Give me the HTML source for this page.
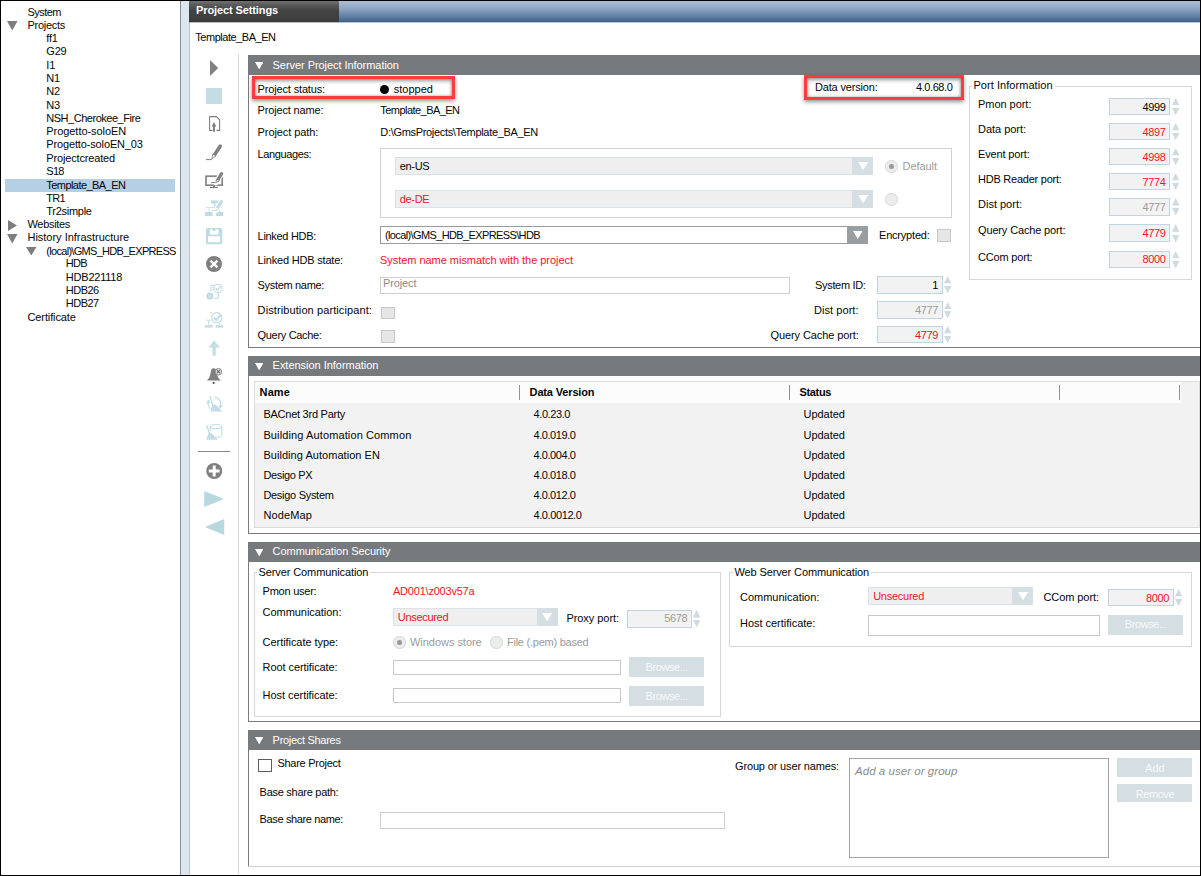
<!DOCTYPE html>
<html lang="en"><head><meta charset="utf-8"><title>Project Settings</title>
<style>
html,body{margin:0;padding:0;background:#fff}
body{width:1201px;height:876px;position:relative;overflow:hidden;font-family:"Liberation Sans",sans-serif;font-size:11px;line-height:14px;color:#050505}
.a{position:absolute}
.t{position:absolute;white-space:nowrap;height:14px}
b.t{font-weight:bold}
</style></head>
<body>
<div class="a" style="left:0px;top:0px;width:1201px;height:876px;background:#fff;"></div>
<div class="a" style="left:180px;top:1px;width:1px;height:874px;background:#8c8c8c;"></div>
<div class="a" style="left:181px;top:1px;width:8px;height:874px;background:#dbe7f0;"></div>
<div class="a" style="left:189px;top:22px;width:1px;height:853px;background:#c2c2c2;"></div>
<div class="a" style="left:189px;top:1px;width:150px;height:21px;background:linear-gradient(#717171 0%,#5a5a5a 18%,#444 45%,#3c3c3c 100%);"></div>
<div class="a" style="left:339px;top:1px;width:861px;height:21px;background:linear-gradient(#abbed7 0%,#8fa7c5 35%,#6682a6 70%,#40618a 100%);"></div>
<div class="a" style="left:189px;top:22px;width:150px;height:1px;background:rgba(60,60,60,.35);"></div>
<div class="a" style="left:339px;top:22px;width:861px;height:1px;background:rgba(64,97,138,.35);"></div>
<b class="t" style="left:196.00px;top:3.00px;color:#fff;letter-spacing:-0.109px;">Project Settings</b>
<span class="t" style="left:195.30px;top:30.00px;letter-spacing:-0.473px;">Template_BA_EN</span>
<div class="a" style="left:5px;top:179px;width:170px;height:13px;background:#b5cfe5;"></div>
<span class="t" style="left:27.50px;top:5.00px;letter-spacing:-0.565px;">System</span>
<span class="t" style="left:27.50px;top:18.00px;letter-spacing:-0.281px;">Projects</span>
<span class="t" style="left:46.30px;top:31.00px;letter-spacing:-0.200px;">ff1</span>
<span class="t" style="left:46.30px;top:44.00px;letter-spacing:-0.200px;">G29</span>
<span class="t" style="left:46.30px;top:58.00px;letter-spacing:-0.200px;">I1</span>
<span class="t" style="left:46.30px;top:71.00px;letter-spacing:-0.200px;">N1</span>
<span class="t" style="left:46.30px;top:84.00px;letter-spacing:-0.200px;">N2</span>
<span class="t" style="left:46.30px;top:98.00px;letter-spacing:-0.200px;">N3</span>
<span class="t" style="left:46.30px;top:111.00px;letter-spacing:-0.477px;">NSH_Cherokee_Fire</span>
<span class="t" style="left:46.30px;top:124.00px;letter-spacing:-0.055px;">Progetto-soloEN</span>
<span class="t" style="left:46.30px;top:137.00px;letter-spacing:-0.142px;">Progetto-soloEN_03</span>
<span class="t" style="left:46.30px;top:151.00px;letter-spacing:-0.160px;">Projectcreated</span>
<span class="t" style="left:46.30px;top:164.00px;letter-spacing:-0.700px;">S18</span>
<span class="t" style="left:46.30px;top:178.00px;letter-spacing:-0.559px;">Template_BA_EN</span>
<span class="t" style="left:46.30px;top:191.00px;letter-spacing:-0.700px;">TR1</span>
<span class="t" style="left:46.30px;top:204.00px;letter-spacing:-0.277px;">Tr2simple</span>
<span class="t" style="left:27.50px;top:217.00px;letter-spacing:-0.318px;">Websites</span>
<span class="t" style="left:27.50px;top:230.00px;letter-spacing:-0.018px;">History Infrastructure</span>
<span class="t" style="left:46.30px;top:244.00px;letter-spacing:-0.700px;">(local)\GMS_HDB_EXPRESS</span>
<span class="t" style="left:65.80px;top:256.00px;letter-spacing:-0.700px;">HDB</span>
<span class="t" style="left:65.80px;top:270.00px;letter-spacing:-0.213px;">HDB221118</span>
<span class="t" style="left:65.80px;top:283.00px;letter-spacing:-0.514px;">HDB26</span>
<span class="t" style="left:65.80px;top:296.00px;letter-spacing:-0.514px;">HDB27</span>
<span class="t" style="left:27.50px;top:310.00px;letter-spacing:-0.112px;">Certificate</span>
<svg class="a" style="left:7px;top:21px" width="10.5" height="9.5" viewBox="0 0 10.5 9.5"><polygon points="0,0 10.5,0 5.25,9.5" fill="#7d7d7d"/></svg>
<svg class="a" style="left:8px;top:220px" width="9" height="11" viewBox="0 0 9 11"><polygon points="0,0 9,5.5 0,11" fill="#7d7d7d"/></svg>
<svg class="a" style="left:7px;top:234px" width="10.5" height="9.5" viewBox="0 0 10.5 9.5"><polygon points="0,0 10.5,0 5.25,9.5" fill="#7d7d7d"/></svg>
<svg class="a" style="left:26.3px;top:247.3px" width="10.5" height="8.5" viewBox="0 0 10.5 8.5"><polygon points="0,0 10.5,0 5.25,8.5" fill="#7d7d7d"/></svg>
<div class="a" style="left:238px;top:54px;width:1px;height:821px;background:#dcdcdc;"></div>
<div class="a" style="left:198px;top:451px;width:32px;height:1px;background:#8a8a8a;"></div>
<svg class="a" style="left:196px;top:54px" width="40" height="490" viewBox="196 54 40 490"><polygon points="210,60 218.2,68 210,76" fill="#808080"/><rect x="206" y="88" width="16" height="16" fill="#c3dde3"/><path d="M212.6,130.4 H209.6 V116.6 H216.4 L219.6,119.8 V130.4 H216.4" fill="none" stroke="#808080" stroke-width="1.1"/><path d="M214,131.8 V125.5" stroke="#808080" stroke-width="2" fill="none"/><polygon points="214,122 216.4,126.6 211.6,126.6" fill="#808080"/><line x1="220.2" y1="146.2" x2="214.4" y2="155" stroke="#808080" stroke-width="3.6" stroke-linecap="round"/><polygon points="212.9,154.0 215.9,156.0 211.9,158.8" fill="#fff" stroke="#808080" stroke-width="0.8"/><path d="M206,159.6 H211.4 L212,158.6" stroke="#808080" stroke-width="1" fill="none"/><rect x="206" y="176.2" width="16.2" height="9" fill="none" stroke="#868686" stroke-width="1.7"/><path d="M214,185.4 V187.4" stroke="#808080" stroke-width="2" fill="none"/><path d="M210,187.5 H218" stroke="#808080" stroke-width="1.2" fill="none"/><line x1="221.6" y1="173.6" x2="216.0" y2="182.7" stroke="#fff" stroke-width="5.4" stroke-linecap="round"/><line x1="221.6" y1="173.6" x2="217.8" y2="179.8" stroke="#808080" stroke-width="3.2" stroke-linecap="round"/><polygon points="216.4,179.0 219.2,180.6 216.0,182.7" fill="#fff" stroke="#808080" stroke-width="0.8"/><path d="M211,182.6 H215.6" stroke="#808080" stroke-width="1" fill="none"/><rect x="211" y="200.4" width="7.5" height="3" fill="#bcdbe2"/><path d="M214.6,203 V207.6" stroke="#bcdbe2" stroke-width="1.6" fill="none"/><path d="M206,207.5 H222.4 M209,207.3 V212 M219.8,209 V212" stroke="#cbe3e9" stroke-width="1" fill="none"/><rect x="205" y="212" width="7.6" height="4" fill="#bcdbe2"/><rect x="215.8" y="212" width="7.4" height="4" fill="#bcdbe2"/><line x1="221.4" y1="201.6" x2="215.8" y2="210.7" stroke="#fff" stroke-width="5.2" stroke-linecap="round"/><line x1="221.4" y1="201.6" x2="217.6" y2="207.8" stroke="#bcdbe2" stroke-width="3" stroke-linecap="round"/><polygon points="216.3,207.0 218.9,208.6 215.8,210.7" fill="#fff" stroke="#bcdbe2" stroke-width="0.8"/><path d="M211.5,210.3 H215.4" stroke="#bcdbe2" stroke-width="1" fill="none"/><rect x="207" y="229" width="14.2" height="14.2" rx="0.8" fill="#fff" stroke="#bcdbe2" stroke-width="2"/><rect x="206.8" y="228.8" width="14.6" height="7.4" fill="#bcdbe2"/><rect x="209.8" y="229.4" width="8.8" height="5.2" fill="#fff"/><rect x="213" y="229" width="2.4" height="2" fill="#bcdbe2"/><circle cx="214" cy="264" r="8" fill="#808080"/><path d="M210.6,260.6 L217.4,267.4 M217.4,260.6 L210.6,267.4" stroke="#fff" stroke-width="2.5" fill="none"/><path d="M210.9,291.4 V285.5 H215 M218.3,292.6 V298.3 H214" stroke="#bcdbe2" stroke-width="1" fill="none"/><path d="M212,287.7 H215 M212,289.7 H214.6" stroke="#bcdbe2" stroke-width="0.9" fill="none"/><circle cx="209.8" cy="296" r="3.5" fill="#bcdbe2"/><circle cx="209.8" cy="296" r="1.6" fill="#d3e8ed"/><circle cx="218.1" cy="288.4" r="4.1" fill="#fff" stroke="#bcdbe2" stroke-width="1"/><path d="M215.7,288.3 L217.5,290.2 L220.6,286.4" stroke="#bcdbe2" stroke-width="1.5" fill="none"/><circle cx="216.8" cy="317.7" r="5.1" fill="#fff" stroke="#bcdbe2" stroke-width="1.1"/><path d="M213.7,317.6 L216.2,320.2 L220.6,314.9" stroke="#bcdbe2" stroke-width="1.8" fill="none"/><path d="M206,320.2 H210.8 M208.7,320.2 V324.6 M219.6,323 V324.6 M210.6,312.4 H212 M210.8,312.4 V313.8" stroke="#bcdbe2" stroke-width="0.9" fill="none"/><rect x="205" y="325" width="7.6" height="2.7" fill="#c4dfe6"/><rect x="215.8" y="325" width="7.4" height="2.7" fill="#c4dfe6"/><polygon points="214.1,340.6 219.9,347.4 208.3,347.4" fill="#c3dfe6"/><rect x="212.5" y="346.6" width="3.2" height="9.2" fill="#c3dfe6"/><path d="M213.4,368.2 C215.8,368.2 216.7,370.2 217,373 C217.4,376.6 218.4,378.6 221,380.5 H206.8 C209.2,378.6 210,376.4 210.6,373 C211,370.2 211.6,368.2 213.4,368.2 Z" fill="#808080"/><circle cx="213.6" cy="382.9" r="1.1" fill="#555"/><circle cx="218.4" cy="371.7" r="3.3" fill="#dcdcdc" stroke="#808080" stroke-width="0.9"/><path d="M216.9,370.2 L219.9,373.2 M219.9,370.2 L216.9,373.2" stroke="#6e6e6e" stroke-width="1.2" fill="none"/><path d="M208.3,402 A6.8,6.8 0 0 0 210.4,408.8" stroke="#bcdbe2" stroke-width="1.1" fill="none"/><polygon points="206.2,402.8 208.5,399.6 210.3,403" fill="#bcdbe2"/><path d="M215,397.4 A6.6,6.6 0 0 1 220.6,406" stroke="#bcdbe2" stroke-width="1.1" fill="none"/><polygon points="218.6,405 222.6,405.6 220,408.8" fill="#bcdbe2"/><path d="M209.9,396.3 L212.6,405" stroke="#bcdbe2" stroke-width="1.3" fill="none"/><polygon points="212.2,404.6 216.4,405.8 222,411.6 210.4,411.6" fill="#d2e7ec"/><path d="M212.6,405 L216.2,406.2" stroke="#bcdbe2" stroke-width="1.6"/><path d="M213,406 L211,411.6 M214,406.2 L213.6,411.6 M215,406.4 L216.4,411.6 M215.8,406.4 L219,411.6 M216.4,406.2 L221.6,411.6" stroke="#bcdbe2" stroke-width="1.05" fill="none"/><ellipse cx="216.2" cy="426.6" rx="5.6" ry="2.2" fill="#fff" stroke="#bcdbe2" stroke-width="1"/><path d="M210.6,426.6 V431 M221.8,426.6 V435 C221.8,437.4 217,437.6 214.6,437.2" stroke="#bcdbe2" stroke-width="1" fill="none"/><path d="M206.6,425.2 L209.4,433.2" stroke="#bcdbe2" stroke-width="1.3" fill="none"/><polygon points="208.6,433 212,434.2 217,439.8 206.4,439.8" fill="#d2e7ec"/><path d="M208.8,433.4 L212,434.6" stroke="#bcdbe2" stroke-width="1.6"/><path d="M209,434.4 L207,439.8 M210,434.6 L209.4,439.8 M210.8,434.8 L212,439.8 M211.4,434.8 L214.4,439.8 M212,434.6 L216.8,439.8" stroke="#bcdbe2" stroke-width="1.05" fill="none"/><circle cx="214.2" cy="471" r="8" fill="#808080"/><path d="M214.2,465.6 V476.4 M208.8,471 H219.6" stroke="#fff" stroke-width="3" fill="none"/><polygon points="204.2,491 224,499 204.2,507" fill="#b7d8e0"/><polygon points="224.2,519 204.8,527 224.2,535" fill="#b7d8e0"/></svg>
<div class="a" style="left:248px;top:55.2px;width:952px;height:19.5px;background:#767a7c;"></div>
<svg class="a" style="left:255px;top:62.0px" width="8.4" height="7.4" viewBox="0 0 8.4 7.4"><polygon points="0,0 8.4,0 4.2,7.4" fill="#fff"/></svg>
<span class="t" style="left:272.60px;top:58.00px;color:#fff;letter-spacing:-0.057px;">Server Project Information</span>
<div class="a" style="left:248px;top:74.2px;width:1px;height:273.1px;background:#7b7b7b;"></div>
<div class="a" style="left:248px;top:347.3px;width:952px;height:1px;background:#7b7b7b;"></div>
<div class="a" style="left:248px;top:356.3px;width:952px;height:19.5px;background:#767a7c;"></div>
<svg class="a" style="left:255px;top:363.1px" width="8.4" height="7.4" viewBox="0 0 8.4 7.4"><polygon points="0,0 8.4,0 4.2,7.4" fill="#fff"/></svg>
<span class="t" style="left:272.60px;top:358.00px;color:#fff;letter-spacing:-0.028px;">Extension Information</span>
<div class="a" style="left:248px;top:375.3px;width:1px;height:157.90000000000003px;background:#7b7b7b;"></div>
<div class="a" style="left:248px;top:533.2px;width:952px;height:1px;background:#7b7b7b;"></div>
<div class="a" style="left:248px;top:542.2px;width:952px;height:19.5px;background:#767a7c;"></div>
<svg class="a" style="left:255px;top:549.0px" width="8.4" height="7.4" viewBox="0 0 8.4 7.4"><polygon points="0,0 8.4,0 4.2,7.4" fill="#fff"/></svg>
<span class="t" style="left:272.60px;top:544.00px;color:#fff;letter-spacing:-0.064px;">Communication Security</span>
<div class="a" style="left:248px;top:561.2px;width:1px;height:160.0px;background:#7b7b7b;"></div>
<div class="a" style="left:248px;top:721.2px;width:952px;height:1px;background:#7b7b7b;"></div>
<div class="a" style="left:248px;top:730.2px;width:952px;height:19.5px;background:#767a7c;"></div>
<svg class="a" style="left:255px;top:737.0px" width="8.4" height="7.4" viewBox="0 0 8.4 7.4"><polygon points="0,0 8.4,0 4.2,7.4" fill="#fff"/></svg>
<span class="t" style="left:272.60px;top:733.00px;color:#fff;letter-spacing:-0.297px;">Project Shares</span>
<div class="a" style="left:248px;top:749.2px;width:1px;height:116.79999999999995px;background:#7b7b7b;"></div>
<div class="a" style="left:248px;top:866px;width:952px;height:1px;background:#cfcfcf;"></div>
<div class="a" style="left:252px;top:76px;width:203px;height:23px;box-sizing:border-box;border:3px solid #fd3c3f;box-shadow:0 2px 4px rgba(0,0,0,.42), inset 0 2px 4px rgba(0,0,0,.36), inset 0 0 3px rgba(0,0,0,.3);"></div>
<div class="a" style="left:804px;top:75px;width:159.6px;height:25px;box-sizing:border-box;border:3px solid #fd3c3f;box-shadow:0 2px 4px rgba(0,0,0,.42), inset 0 2px 4px rgba(0,0,0,.36), inset 0 0 3px rgba(0,0,0,.3);"></div>
<span class="t" style="left:257.60px;top:82.00px;letter-spacing:-0.154px;">Project status:</span>
<div class="a" style="left:380px;top:85px;width:9.4px;height:9.4px;border-radius:50%;background:#000"></div>
<span class="t" style="left:393.70px;top:82.00px;letter-spacing:0.021px;">stopped</span>
<span class="t" style="left:257.60px;top:103.00px;letter-spacing:-0.167px;">Project name:</span>
<span class="t" style="left:380.30px;top:103.00px;letter-spacing:-0.545px;">Template_BA_EN</span>
<span class="t" style="left:257.60px;top:125.00px;letter-spacing:-0.082px;">Project path:</span>
<span class="t" style="left:380.30px;top:125.00px;letter-spacing:-0.317px;">D:\GmsProjects\Template_BA_EN</span>
<span class="t" style="left:257.60px;top:147.00px;letter-spacing:-0.380px;">Languages:</span>
<span class="t" style="left:815.00px;top:80.00px;letter-spacing:-0.170px;">Data version:</span>
<span class="t" style="left:916.00px;top:80.00px;letter-spacing:-0.421px;">4.0.68.0</span>
<div class="a" style="left:380px;top:148.3px;width:571.6px;height:69.5px;border:1px solid #d0d1d2;box-sizing:border-box;"></div>
<div class="a" style="left:395px;top:157.4px;width:478px;height:17.5px;background:#efefef;border:1px solid #dbe1e4;box-sizing:border-box;"></div>
<div class="a" style="left:852px;top:157.4px;width:21px;height:17.5px;background:#d5dee2;"></div>
<svg class="a" style="left:857.8px;top:162.0px" width="10.2" height="8.2" viewBox="0 0 10.2 8.2"><polygon points="0,0 10.2,0 5.1,8.2" fill="#fff"/></svg>
<span class="t" style="left:399.80px;top:159.00px;color:#050505;letter-spacing:-0.338px;">en-US</span>
<div class="a" style="left:395px;top:190.3px;width:478px;height:17.5px;background:#efefef;border:1px solid #dbe1e4;box-sizing:border-box;"></div>
<div class="a" style="left:852px;top:190.3px;width:21px;height:17.5px;background:#d5dee2;"></div>
<svg class="a" style="left:857.8px;top:194.9px" width="10.2" height="8.2" viewBox="0 0 10.2 8.2"><polygon points="0,0 10.2,0 5.1,8.2" fill="#fff"/></svg>
<span class="t" style="left:399.80px;top:192.00px;color:#ee1428;letter-spacing:-0.338px;">de-DE</span>
<div class="a" style="left:885.1999999999999px;top:160.20000000000002px;width:12.4px;height:12.4px;border-radius:50%;box-sizing:border-box;background:#ececec;border:1px solid #d4dadc"></div>
<div class="a" style="left:889.1999999999999px;top:164.20000000000002px;width:4.4px;height:4.4px;border-radius:50%;background:#9a9a9a"></div>
<div class="a" style="left:885.1999999999999px;top:193.20000000000002px;width:12.4px;height:12.4px;border-radius:50%;box-sizing:border-box;background:#ececec;border:1px solid #d4dadc"></div>
<span class="t" style="left:902.60px;top:159.00px;color:#9b9b9b;letter-spacing:-0.066px;">Default</span>
<span class="t" style="left:257.60px;top:229.00px;letter-spacing:-0.306px;">Linked HDB:</span>
<div class="a" style="left:380px;top:226.2px;width:488px;height:17.5px;background:#fff;border:1px solid #979b9d;box-sizing:border-box;"></div>
<div class="a" style="left:847.4px;top:226.2px;width:20.6px;height:17.5px;background:#999ea1;"></div>
<svg class="a" style="left:852.8px;top:231px" width="9.6" height="8" viewBox="0 0 9.6 8"><polygon points="0,0 9.6,0 4.8,8" fill="#fff"/></svg>
<span class="t" style="left:385.00px;top:228.00px;letter-spacing:-0.622px;">(local)\GMS_HDB_EXPRESS\HDB</span>
<span class="t" style="left:879.00px;top:228.00px;letter-spacing:-0.199px;">Encrypted:</span>
<div class="a" style="left:937px;top:229.3px;width:14px;height:12.4px;background:#e6e6e6;border:1px solid #c9c9c9;box-sizing:border-box;"></div>
<span class="t" style="left:257.60px;top:253.00px;letter-spacing:-0.192px;">Linked HDB state:</span>
<span class="t" style="left:380.00px;top:253.00px;color:#ee1428;letter-spacing:-0.038px;">System name mismatch with the project</span>
<span class="t" style="left:257.60px;top:278.00px;letter-spacing:-0.326px;">System name:</span>
<div class="a" style="left:380px;top:276.6px;width:409.6px;height:17.2px;background:#fff;border:1px solid #cfcfcf;box-sizing:border-box;"></div>
<span class="t" style="left:383.00px;top:276.00px;color:#8a8a8a;letter-spacing:-0.121px;">Project</span>
<span class="t" style="left:257.60px;top:303.00px;letter-spacing:0.100px;">Distribution participant:</span>
<div class="a" style="left:381.4px;top:306.5px;width:14px;height:12.4px;background:#e6e6e6;border:1px solid #c9c9c9;box-sizing:border-box;"></div>
<span class="t" style="left:257.60px;top:328.00px;letter-spacing:-0.323px;">Query Cache:</span>
<div class="a" style="left:381.4px;top:330.4px;width:14px;height:12.4px;background:#e6e6e6;border:1px solid #c9c9c9;box-sizing:border-box;"></div>
<span class="t" style="left:815.00px;top:278.00px;letter-spacing:-0.320px;">System ID:</span>
<div class="a" style="left:877.4px;top:276.3px;width:65.2px;height:17.3px;background:#f2f2f2;border:1px solid #c1d4e2;box-sizing:border-box;"></div>
<span class="t" style="right:263.00px;top:278.00px;color:#050505;letter-spacing:-0.350px;">1</span>
<svg class="a" style="left:944.1px;top:276.40000000000003px" width="7.4" height="7.3500000000000005" viewBox="0 0 7.4 7.3500000000000005"><polygon points="0,7.3500000000000005 7.4,7.3500000000000005 3.7,0" fill="#d0dbdf"/></svg>
<svg class="a" style="left:944.1px;top:286.15px" width="7.4" height="7.3500000000000005" viewBox="0 0 7.4 7.3500000000000005"><polygon points="0,0 7.4,0 3.7,7.3500000000000005" fill="#d0dbdf"/></svg>
<span class="t" style="left:814.00px;top:303.00px;letter-spacing:0.058px;">Dist port:</span>
<div class="a" style="left:877.4px;top:301.4px;width:65.2px;height:17.2px;background:#f2f2f2;border:1px solid #c1d4e2;box-sizing:border-box;"></div>
<span class="t" style="right:263.00px;top:303.00px;color:#9b9b9b;letter-spacing:-0.350px;">4777</span>
<svg class="a" style="left:944.1px;top:301.5px" width="7.4" height="7.3" viewBox="0 0 7.4 7.3"><polygon points="0,7.3 7.4,7.3 3.7,0" fill="#d0dbdf"/></svg>
<svg class="a" style="left:944.1px;top:311.19999999999993px" width="7.4" height="7.3" viewBox="0 0 7.4 7.3"><polygon points="0,0 7.4,0 3.7,7.3" fill="#d0dbdf"/></svg>
<span class="t" style="left:770.60px;top:328.00px;letter-spacing:-0.110px;">Query Cache port:</span>
<div class="a" style="left:877.4px;top:326.3px;width:65.2px;height:17.2px;background:#f2f2f2;border:1px solid #c1d4e2;box-sizing:border-box;"></div>
<span class="t" style="right:263.00px;top:328.00px;color:#ee1428;letter-spacing:-0.350px;">4779</span>
<svg class="a" style="left:944.1px;top:326.40000000000003px" width="7.4" height="7.3" viewBox="0 0 7.4 7.3"><polygon points="0,7.3 7.4,7.3 3.7,0" fill="#d0dbdf"/></svg>
<svg class="a" style="left:944.1px;top:336.09999999999997px" width="7.4" height="7.3" viewBox="0 0 7.4 7.3"><polygon points="0,0 7.4,0 3.7,7.3" fill="#d0dbdf"/></svg>
<div class="a" style="left:969px;top:86.3px;width:223px;height:193.4px;border:1px solid #d6d9db;box-sizing:border-box;"></div>
<div class="a" style="left:972.4px;top:86.3px;width:82.2px;height:1px;background:#fff;"></div>
<span class="t" style="left:973.40px;top:78.00px;letter-spacing:0.058px;">Port Information</span>
<span class="t" style="left:978.00px;top:97.00px;letter-spacing:-0.041px;">Pmon port:</span>
<div class="a" style="left:1109.4px;top:98.3px;width:60.8px;height:16.8px;background:#f2f2f2;border:1px solid #c1d4e2;box-sizing:border-box;"></div>
<span class="t" style="right:35.40px;top:100.00px;color:#050505;letter-spacing:-0.350px;">4999</span>
<svg class="a" style="left:1171.7px;top:98.39999999999999px" width="7.4" height="7.1000000000000005" viewBox="0 0 7.4 7.1000000000000005"><polygon points="0,7.1000000000000005 7.4,7.1000000000000005 3.7,0" fill="#d0dbdf"/></svg>
<svg class="a" style="left:1171.7px;top:107.9px" width="7.4" height="7.1000000000000005" viewBox="0 0 7.4 7.1000000000000005"><polygon points="0,0 7.4,0 3.7,7.1000000000000005" fill="#d0dbdf"/></svg>
<span class="t" style="left:978.00px;top:122.00px;letter-spacing:-0.031px;">Data port:</span>
<div class="a" style="left:1109.4px;top:123.3px;width:60.8px;height:17px;background:#f2f2f2;border:1px solid #c1d4e2;box-sizing:border-box;"></div>
<span class="t" style="right:35.40px;top:125.00px;color:#ee1428;letter-spacing:-0.350px;">4897</span>
<svg class="a" style="left:1171.7px;top:123.39999999999999px" width="7.4" height="7.2" viewBox="0 0 7.4 7.2"><polygon points="0,7.2 7.4,7.2 3.7,0" fill="#d0dbdf"/></svg>
<svg class="a" style="left:1171.7px;top:133.00000000000003px" width="7.4" height="7.2" viewBox="0 0 7.4 7.2"><polygon points="0,0 7.4,0 3.7,7.2" fill="#d0dbdf"/></svg>
<span class="t" style="left:978.00px;top:147.00px;letter-spacing:-0.146px;">Event port:</span>
<div class="a" style="left:1109.4px;top:148.29999999999998px;width:60.8px;height:17px;background:#f2f2f2;border:1px solid #c1d4e2;box-sizing:border-box;"></div>
<span class="t" style="right:35.40px;top:150.00px;color:#ee1428;letter-spacing:-0.350px;">4998</span>
<svg class="a" style="left:1171.7px;top:148.39999999999998px" width="7.4" height="7.2" viewBox="0 0 7.4 7.2"><polygon points="0,7.2 7.4,7.2 3.7,0" fill="#d0dbdf"/></svg>
<svg class="a" style="left:1171.7px;top:158.0px" width="7.4" height="7.2" viewBox="0 0 7.4 7.2"><polygon points="0,0 7.4,0 3.7,7.2" fill="#d0dbdf"/></svg>
<span class="t" style="left:978.00px;top:172.00px;letter-spacing:-0.240px;">HDB Reader port:</span>
<div class="a" style="left:1109.4px;top:173.29999999999998px;width:60.8px;height:17px;background:#f2f2f2;border:1px solid #c1d4e2;box-sizing:border-box;"></div>
<span class="t" style="right:35.40px;top:175.00px;color:#ee1428;letter-spacing:-0.350px;">7774</span>
<svg class="a" style="left:1171.7px;top:173.39999999999998px" width="7.4" height="7.2" viewBox="0 0 7.4 7.2"><polygon points="0,7.2 7.4,7.2 3.7,0" fill="#d0dbdf"/></svg>
<svg class="a" style="left:1171.7px;top:183.0px" width="7.4" height="7.2" viewBox="0 0 7.4 7.2"><polygon points="0,0 7.4,0 3.7,7.2" fill="#d0dbdf"/></svg>
<span class="t" style="left:978.00px;top:197.00px;">Dist port:</span>
<div class="a" style="left:1109.4px;top:198.2px;width:60.8px;height:17.4px;background:#f2f2f2;border:1px solid #c1d4e2;box-sizing:border-box;"></div>
<span class="t" style="right:35.40px;top:200.00px;color:#9b9b9b;letter-spacing:-0.350px;">4777</span>
<svg class="a" style="left:1171.7px;top:198.29999999999998px" width="7.4" height="7.3999999999999995" viewBox="0 0 7.4 7.3999999999999995"><polygon points="0,7.3999999999999995 7.4,7.3999999999999995 3.7,0" fill="#d0dbdf"/></svg>
<svg class="a" style="left:1171.7px;top:208.1px" width="7.4" height="7.3999999999999995" viewBox="0 0 7.4 7.3999999999999995"><polygon points="0,0 7.4,0 3.7,7.3999999999999995" fill="#d0dbdf"/></svg>
<span class="t" style="left:978.00px;top:223.00px;letter-spacing:-0.146px;">Query Cache port:</span>
<div class="a" style="left:1109.4px;top:224.2px;width:60.8px;height:18.2px;background:#f2f2f2;border:1px solid #c1d4e2;box-sizing:border-box;"></div>
<span class="t" style="right:35.40px;top:226.00px;color:#ee1428;letter-spacing:-0.350px;">4779</span>
<svg class="a" style="left:1171.7px;top:224.29999999999998px" width="7.4" height="7.8" viewBox="0 0 7.4 7.8"><polygon points="0,7.8 7.4,7.8 3.7,0" fill="#d0dbdf"/></svg>
<svg class="a" style="left:1171.7px;top:234.49999999999997px" width="7.4" height="7.8" viewBox="0 0 7.4 7.8"><polygon points="0,0 7.4,0 3.7,7.8" fill="#d0dbdf"/></svg>
<span class="t" style="left:978.00px;top:250.00px;letter-spacing:-0.185px;">CCom port:</span>
<div class="a" style="left:1109.4px;top:250.7px;width:60.8px;height:17.8px;background:#f2f2f2;border:1px solid #c1d4e2;box-sizing:border-box;"></div>
<span class="t" style="right:35.40px;top:252.00px;color:#ee1428;letter-spacing:-0.350px;">8000</span>
<svg class="a" style="left:1171.7px;top:250.79999999999998px" width="7.4" height="7.6000000000000005" viewBox="0 0 7.4 7.6000000000000005"><polygon points="0,7.6000000000000005 7.4,7.6000000000000005 3.7,0" fill="#d0dbdf"/></svg>
<svg class="a" style="left:1171.7px;top:260.79999999999995px" width="7.4" height="7.6000000000000005" viewBox="0 0 7.4 7.6000000000000005"><polygon points="0,0 7.4,0 3.7,7.6000000000000005" fill="#d0dbdf"/></svg>
<div class="a" style="left:254.4px;top:381px;width:945.6px;height:146.5px;background:#f2f2f2;border:1px solid #d9dcde;box-sizing:border-box;"></div>
<div class="a" style="left:255.4px;top:382px;width:925.6px;height:21px;background:#fcfcfc;"></div>
<div class="a" style="left:519px;top:385px;width:1px;height:15.4px;background:#929292;"></div>
<div class="a" style="left:789px;top:385px;width:1px;height:15.4px;background:#929292;"></div>
<div class="a" style="left:1059px;top:385px;width:1px;height:15.4px;background:#929292;"></div>
<div class="a" style="left:1179px;top:385px;width:1px;height:15.4px;background:#929292;"></div>
<b class="t" style="left:259.60px;top:385.00px;letter-spacing:0.108px;">Name</b>
<b class="t" style="left:529.60px;top:385.00px;letter-spacing:-0.153px;">Data Version</b>
<b class="t" style="left:799.40px;top:385.00px;letter-spacing:-0.321px;">Status</b>
<span class="t" style="left:263.40px;top:407.00px;letter-spacing:-0.250px;">BACnet 3rd Party</span>
<span class="t" style="left:533.50px;top:407.00px;letter-spacing:-0.396px;">4.0.23.0</span>
<span class="t" style="left:803.50px;top:407.00px;letter-spacing:-0.042px;">Updated</span>
<span class="t" style="left:263.40px;top:428.00px;letter-spacing:0.118px;">Building Automation Common</span>
<span class="t" style="left:533.50px;top:428.00px;letter-spacing:-0.431px;">4.0.019.0</span>
<span class="t" style="left:803.50px;top:428.00px;letter-spacing:-0.042px;">Updated</span>
<span class="t" style="left:263.40px;top:448.00px;letter-spacing:0.046px;">Building Automation EN</span>
<span class="t" style="left:533.50px;top:448.00px;letter-spacing:-0.431px;">4.0.004.0</span>
<span class="t" style="left:803.50px;top:448.00px;letter-spacing:-0.042px;">Updated</span>
<span class="t" style="left:263.40px;top:468.00px;letter-spacing:-0.332px;">Desigo PX</span>
<span class="t" style="left:533.50px;top:468.00px;letter-spacing:-0.431px;">4.0.018.0</span>
<span class="t" style="left:803.50px;top:468.00px;letter-spacing:-0.042px;">Updated</span>
<span class="t" style="left:263.40px;top:488.00px;letter-spacing:-0.291px;">Desigo System</span>
<span class="t" style="left:533.50px;top:488.00px;letter-spacing:-0.431px;">4.0.012.0</span>
<span class="t" style="left:803.50px;top:488.00px;letter-spacing:-0.042px;">Updated</span>
<span class="t" style="left:263.40px;top:508.00px;letter-spacing:0.128px;">NodeMap</span>
<span class="t" style="left:533.50px;top:508.00px;letter-spacing:-0.400px;">4.0.0012.0</span>
<span class="t" style="left:803.50px;top:508.00px;letter-spacing:-0.042px;">Updated</span>
<div class="a" style="left:254px;top:572px;width:467px;height:144.6px;border:1px solid #d6d9db;box-sizing:border-box;"></div>
<div class="a" style="left:257.4px;top:572px;width:113px;height:1px;background:#fff;"></div>
<span class="t" style="left:258.40px;top:565.00px;letter-spacing:-0.094px;">Server Communication</span>
<span class="t" style="left:262.60px;top:584.00px;letter-spacing:-0.245px;">Pmon user:</span>
<span class="t" style="left:393.00px;top:584.00px;color:#ee1428;letter-spacing:-0.215px;">AD001\z003v57a</span>
<span class="t" style="left:262.60px;top:605.00px;letter-spacing:-0.049px;">Communication:</span>
<div class="a" style="left:393px;top:608.3px;width:164.6px;height:17.5px;background:#efefef;border:1px solid #dbe1e4;box-sizing:border-box;"></div>
<div class="a" style="left:536.6px;top:608.3px;width:21px;height:17.5px;background:#d5dee2;"></div>
<svg class="a" style="left:542.4px;top:612.9px" width="10.2" height="8.2" viewBox="0 0 10.2 8.2"><polygon points="0,0 10.2,0 5.1,8.2" fill="#fff"/></svg>
<span class="t" style="left:397.80px;top:610.00px;color:#ee1428;letter-spacing:-0.311px;">Unsecured</span>
<span class="t" style="left:566.40px;top:611.00px;letter-spacing:-0.053px;">Proxy port:</span>
<div class="a" style="left:627.4px;top:610.3px;width:64.4px;height:17.5px;background:#f2f2f2;border:1px solid #c1d4e2;box-sizing:border-box;"></div>
<span class="t" style="right:513.80px;top:611.00px;color:#9b9b9b;letter-spacing:-0.350px;">5678</span>
<svg class="a" style="left:693.3px;top:610.4px" width="7.4" height="7.45" viewBox="0 0 7.4 7.45"><polygon points="0,7.45 7.4,7.45 3.7,0" fill="#d0dbdf"/></svg>
<svg class="a" style="left:693.3px;top:620.2499999999999px" width="7.4" height="7.45" viewBox="0 0 7.4 7.45"><polygon points="0,0 7.4,0 3.7,7.45" fill="#d0dbdf"/></svg>
<span class="t" style="left:262.60px;top:635.00px;letter-spacing:-0.060px;">Certificate type:</span>
<div class="a" style="left:393.40000000000003px;top:636.3px;width:12.4px;height:12.4px;border-radius:50%;box-sizing:border-box;background:#ececec;border:1px solid #d4dadc"></div>
<div class="a" style="left:397.40000000000003px;top:640.3px;width:4.4px;height:4.4px;border-radius:50%;background:#9a9a9a"></div>
<span class="t" style="left:410.00px;top:635.00px;color:#9b9b9b;letter-spacing:-0.034px;">Windows store</span>
<div class="a" style="left:490.2px;top:636.3px;width:12.4px;height:12.4px;border-radius:50%;box-sizing:border-box;background:#ececec;border:1px solid #d4dadc"></div>
<span class="t" style="left:507.00px;top:635.00px;color:#9b9b9b;letter-spacing:-0.247px;">File (.pem) based</span>
<span class="t" style="left:262.60px;top:660.00px;letter-spacing:-0.084px;">Root certificate:</span>
<div class="a" style="left:393px;top:660.4px;width:228.2px;height:14.4px;background:#fff;border:1px solid #c8c8c8;box-sizing:border-box;"></div>
<div class="a" style="left:629.2px;top:657.4px;width:74.8px;height:19.6px;background:#d5dee2;"></div>
<span class="t" style="left:645.60px;top:660.00px;color:#f7f9fa;letter-spacing:-0.429px;">Browse...</span>
<span class="t" style="left:262.60px;top:688.00px;letter-spacing:-0.048px;">Host certificate:</span>
<div class="a" style="left:393px;top:688.4px;width:228.2px;height:14.4px;background:#fff;border:1px solid #c8c8c8;box-sizing:border-box;"></div>
<div class="a" style="left:629.2px;top:686.4px;width:74.8px;height:19.6px;background:#d5dee2;"></div>
<span class="t" style="left:645.60px;top:689.00px;color:#f7f9fa;letter-spacing:-0.429px;">Browse...</span>
<div class="a" style="left:729px;top:572px;width:463.2px;height:74.6px;border:1px solid #d6d9db;box-sizing:border-box;"></div>
<div class="a" style="left:733.4px;top:572px;width:137.6px;height:1px;background:#fff;"></div>
<span class="t" style="left:734.40px;top:565.00px;letter-spacing:-0.115px;">Web Server Communication</span>
<span class="t" style="left:740.00px;top:590.00px;letter-spacing:-0.006px;">Communication:</span>
<div class="a" style="left:868.4px;top:587.4px;width:164.6px;height:17.3px;background:#efefef;border:1px solid #dbe1e4;box-sizing:border-box;"></div>
<div class="a" style="left:1012.0px;top:587.4px;width:21px;height:17.3px;background:#d5dee2;"></div>
<svg class="a" style="left:1017.8px;top:592.0px" width="10.2" height="8.2" viewBox="0 0 10.2 8.2"><polygon points="0,0 10.2,0 5.1,8.2" fill="#fff"/></svg>
<span class="t" style="left:873.20px;top:589.00px;color:#ee1428;letter-spacing:-0.267px;">Unsecured</span>
<span class="t" style="left:1043.40px;top:590.00px;letter-spacing:-0.065px;">CCom port:</span>
<div class="a" style="left:1108.4px;top:589.3px;width:65.2px;height:17px;background:#f2f2f2;border:1px solid #c1d4e2;box-sizing:border-box;"></div>
<span class="t" style="right:32.00px;top:591.00px;color:#ee1428;letter-spacing:-0.350px;">8000</span>
<svg class="a" style="left:1175.1000000000001px;top:589.4px" width="7.4" height="7.2" viewBox="0 0 7.4 7.2"><polygon points="0,7.2 7.4,7.2 3.7,0" fill="#d0dbdf"/></svg>
<svg class="a" style="left:1175.1000000000001px;top:598.9999999999999px" width="7.4" height="7.2" viewBox="0 0 7.4 7.2"><polygon points="0,0 7.4,0 3.7,7.2" fill="#d0dbdf"/></svg>
<span class="t" style="left:740.00px;top:616.00px;letter-spacing:-0.024px;">Host certificate:</span>
<div class="a" style="left:868.4px;top:615.4px;width:231.8px;height:20.3px;background:#fff;border:1px solid #c8c8c8;box-sizing:border-box;"></div>
<div class="a" style="left:1108.4px;top:615.4px;width:74.8px;height:19.2px;background:#d5dee2;"></div>
<span class="t" style="left:1124.80px;top:617.00px;color:#f7f9fa;letter-spacing:-0.429px;">Browse...</span>
<div class="a" style="left:258px;top:759.3px;width:14px;height:12.5px;background:#fff;border:1px solid #5d5d5d;box-sizing:border-box;"></div>
<span class="t" style="left:277.40px;top:756.00px;letter-spacing:-0.266px;">Share Project</span>
<span class="t" style="left:259.60px;top:785.00px;letter-spacing:-0.273px;">Base share path:</span>
<span class="t" style="left:259.60px;top:812.00px;letter-spacing:-0.368px;">Base share name:</span>
<div class="a" style="left:380.4px;top:811.6px;width:344.4px;height:17.2px;background:#fff;border:1px solid #cfcfcf;box-sizing:border-box;"></div>
<span class="t" style="left:735.00px;top:759.00px;letter-spacing:-0.150px;">Group or user names:</span>
<div class="a" style="left:849.4px;top:758.2px;width:259.8px;height:99.5px;background:#fff;border:1px solid #9fa2a6;box-sizing:border-box;"></div>
<span class="t" style="font-size:11.5px;left:855.00px;top:764.00px;color:#8c8c8c;font-style:italic;letter-spacing:0.044px;">Add a user or group</span>
<div class="a" style="left:1117.4px;top:758.3px;width:75px;height:18.3px;background:#d5dee2;"></div>
<span class="t" style="left:1145.10px;top:761.00px;color:#f7f9fa;letter-spacing:0.007px;">Add</span>
<div class="a" style="left:1117.4px;top:784.4px;width:75px;height:18px;background:#d5dee2;"></div>
<span class="t" style="left:1135.70px;top:787.00px;color:#f7f9fa;letter-spacing:-0.428px;">Remove</span>
<div class="a" style="left:0px;top:0px;width:1201px;height:1px;background:#000;"></div>
<div class="a" style="left:0px;top:875px;width:1201px;height:1px;background:#000;"></div>
<div class="a" style="left:0px;top:0px;width:1px;height:876px;background:#000;"></div>
<div class="a" style="left:1200px;top:0px;width:1px;height:876px;background:#000;"></div>
</body></html>
